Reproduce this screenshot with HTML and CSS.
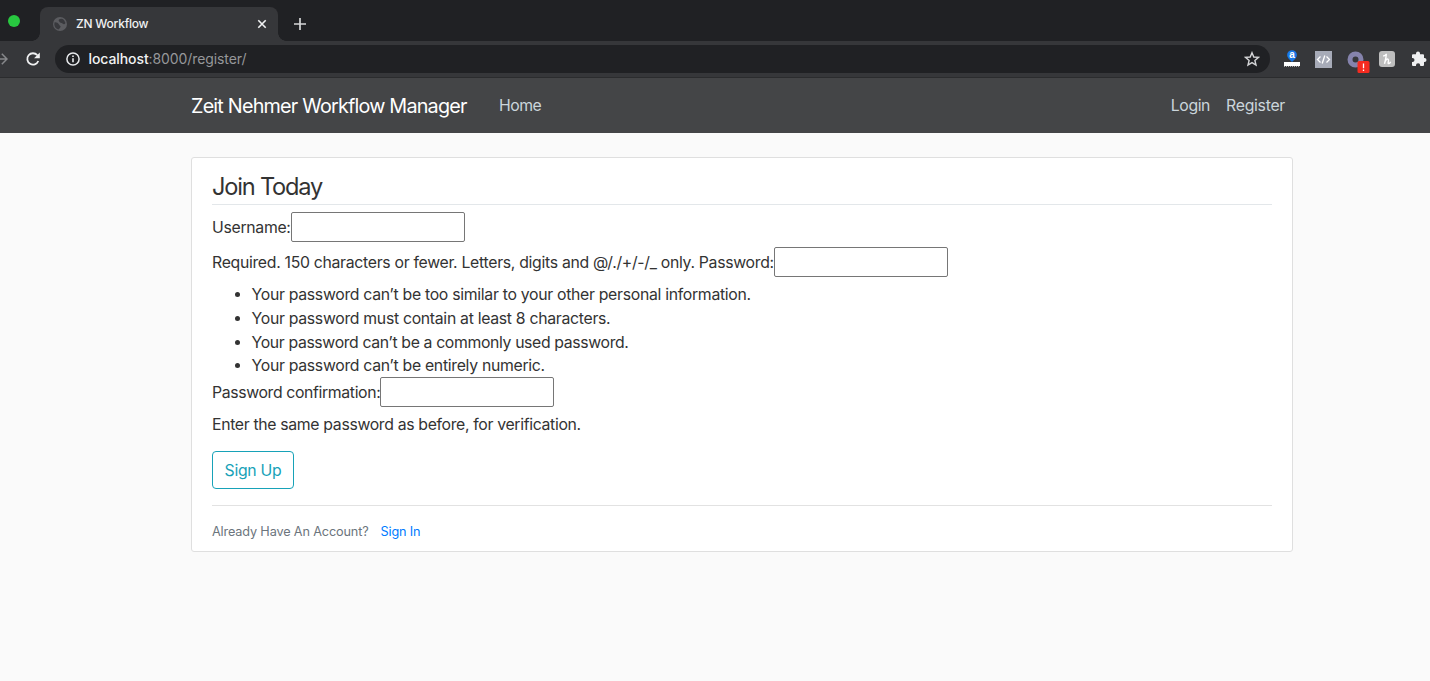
FILE: index.html
```html
<!DOCTYPE html>
<html lang="en">
<head>
<meta charset="utf-8">
<title>ZN Workflow</title>
<link rel="stylesheet" href="styles.css">
</head>
<body>
<div class="tabstrip">
  <span class="window-dot"></span>
  <div class="tab">
    <svg class="globe" width="14" height="14" viewBox="0 0 14 14"><circle cx="7" cy="7" r="7" fill="#5b5c60"/><path d="M1.5 5.5C3 5 5 6 6 7.5S8 9 7.500 10 6 12 5.500 12.500C3 12 1.500 10 1.300 7.500ZM6 2.500C7.500 1.500 9.500 1.600 11 3L12.500 6C11.500 7.800 10.500 7.500 9.500 6.500S7 6 6.500 5 5.200 3.500 6 2.500Z" fill="#38393d"/></svg>
    <span class="tab-title">ZN Workflow</span>
    <svg class="tab-close" width="10" height="10" viewBox="0 0 10 10"><path d="M1.300 1.300 8.700 8.700M8.700 1.300 1.300 8.700" stroke="#f1f2f3" stroke-width="1.600"/></svg>
  </div>
  <svg class="tab-new" width="12" height="12" viewBox="0 0 12 12"><path d="M6 0V12M0 6H12" stroke="#d5d6d8" stroke-width="1.700"/></svg>
</div>
<div class="toolbar">
  <svg class="forward" width="8" height="12" viewBox="0 0 8 12"><path d="M0 6H7M1.800 .8 7 6 1.800 11.200" fill="none" stroke="#87888b" stroke-width="1.500"/></svg>
  <svg class="reload" width="16" height="16" viewBox="0 0 16 16"><path d="M13.300 10A5.700 5.700 0 1 1 12.300 4.200" fill="none" stroke="#f1f2f3" stroke-width="1.800"/><path d="M14.800 1.500V7.200H9.100Z" fill="#f1f2f3"/></svg>
  <div class="address">
    <svg width="14" height="14" viewBox="0 0 14 14"><circle cx="7" cy="7" r="6.100" fill="none" stroke="#e8eaed" stroke-width="1.500"/><path d="M7 6.200V10.300M7 3.500V5" stroke="#e8eaed" stroke-width="1.600"/></svg>
    <span class="url"><b>localhost</b>:8000/register/</span>
    <svg class="star" width="16" height="16" viewBox="0 0 16 16"><path d="M8 1.700 9.800 6 14.500 6.400 10.900 9.500 12 14.100 8 11.600 4 14.100 5.100 9.500 1.500 6.400 6.200 6Z" fill="none" stroke="#d5d6d8" stroke-width="1.400"/></svg>
  </div>
  <div class="extensions">
    <svg width="16" height="18" viewBox="0 0 16 18"><path d="M8 12 4.500 8.500A4.900 4.900 0 1 1 11.500 8.500Z" fill="#1877e8"/><text x="8" y="8" class="letter-a">a</text><path d="M0 12H16V16H0Z" fill="#fff"/><path d="M0 16.500H16" stroke="#aaa" stroke-dasharray="1 1"/></svg>
    <svg width="17" height="17" viewBox="0 0 17 17"><path d="M0 0H17V17H0Z" fill="#a7abb8"/><path d="M5.500 5.500 2.500 8.500 5.500 11.500M11.500 5.500 14.500 8.500 11.500 11.500M9.800 4.500 7.200 12.500" fill="none" stroke="#fff" stroke-width="1.300"/></svg>
    <svg width="23" height="23" viewBox="0 0 23 23"><circle cx="8.500" cy="8.500" r="5.500" fill="none" stroke="#8583ac" stroke-width="5"/><rect x="10.500" y="10" width="12" height="12" rx="1.500" fill="#f52b20"/><path d="M16.500 12.500V17.300M16.500 18.500V20" stroke="#fff" stroke-width="1.300"/></svg>
    <svg width="16" height="16" viewBox="0 0 16 16"><rect width="16" height="16" rx="3" fill="#bebebe"/><path d="M4.200 5C5.500 4.800 7.200 4 7.300 2.800C7.300 6 6.500 9 5.500 12.800C6.200 9.500 8 7.300 9.200 8.200S8.300 12.300 9.500 12.500 11.300 11.500 11.600 10.700" fill="none" stroke="#fff" stroke-width="1.400"/></svg>
    <svg width="16" height="16" viewBox="0 0 16 16"><path d="M1 4.300Q1 3.300 2 3.300H5V2.500A2 2 0 0 1 9 2.500V3.300H12Q13 3.300 13 4.300V7H13.500A2 2 0 0 1 13.500 11H13V14Q13 15 12 15H9.200V14.300A2.100 2.100 0 0 0 5 14.300V15H2Q1 15 1 14V11H1.500A2 2 0 0 0 1.500 7H1Z" fill="#eff0f1"/></svg>
  </div>
</div>
<nav class="navbar">
  <a class="brand">Zeit Nehmer Workflow Manager</a>
  <a class="nav-link home">Home</a>
  <a class="nav-link login">Login</a>
  <a class="nav-link">Register</a>
</nav>
<main class="card">
  <h1 class="legend">Join Today</h1>
  <form>
    <div class="row row-user"><label>Username:</label><input></div>
    <div class="row row-pass"><span>Required. 150 characters or fewer. Letters, digits and @/./+/-/_ only. Password:</span><input></div>
    <ul class="rules">
      <li>Your password can’t be too similar to your other personal information.</li>
      <li>Your password must contain at least 8 characters.</li>
      <li class="rule-common">Your password can’t be a commonly used password.</li>
      <li>Your password can’t be entirely numeric.</li>
    </ul>
    <div class="row row-confirm"><label>Password confirmation:</label><input></div>
    <p class="help">Enter the same password as before, for verification.</p>
    <button class="signup" type="button">Sign Up</button>
  </form>
  <div class="footer"><span>Already Have An Account?</span><a class="signin">Sign In</a></div>
</main>
</body>
</html>
```

FILE: styles.css
```css
* { box-sizing: border-box; }
body { margin: 0; height: 681px; overflow: hidden; background: #fafafa; color: #333; font: 16px/24px Inter, "Liberation Sans", sans-serif; }
svg { display: block; flex: none; }
.tabstrip { height: 41px; background: #202124; display: flex; align-items: flex-end; }
.window-dot { width: 12px; height: 12px; border-radius: 50%; background: #28c840; margin: 0 20px 14px 8px; flex: none; }
.tab { position: relative; width: 238px; height: 34px; background: #36373a; border-radius: 8px 8px 0 0; display: flex; align-items: center; padding: 0 11px 0 13px; }
.tab::before, .tab::after { content: ""; position: absolute; bottom: 0; width: 8px; height: 8px; }
.tab::before { left: -8px; background: radial-gradient(circle at 0 0, transparent 7.5px, #36373a 8px); }
.tab::after { right: -8px; background: radial-gradient(circle at 100% 0, transparent 7.5px, #36373a 8px); }
.tab-title { margin-left: 9px; color: #f1f2f3; font-size: 12px; font-weight: 500; letter-spacing: -.22px; }
.tab-close { margin-left: auto; }
.tab-new { margin: 0 0 11px 16px; }
.toolbar { height: 37px; background: #36373a; border-bottom: 1px solid #2b2c2e; display: flex; align-items: center; }
.reload { margin-left: 17px; }
.address { width: 1215px; height: 28px; margin-left: 14px; border-radius: 14px; background: #202124; display: flex; align-items: center; padding: 0 10px 0 11px; flex: none; }
.url { margin-left: 8.5px; color: #96979a; font-size: 14px; letter-spacing: -.09px; white-space: nowrap; }
.url b { color: #f1f2f3; font-weight: 500; }
.star { margin-left: auto; }
.extensions { display: flex; align-items: center; margin-left: 14px; gap: 15px; flex: none; }
.extensions svg:nth-child(3) { margin: 7px -7px 0 0; }
.extensions svg:nth-child(4) { margin-left: 1px; }
.extensions svg:nth-child(5) { margin-left: 1px; }
.letter-a { font: bold 10px "Liberation Sans", sans-serif; fill: #fff; text-anchor: middle; }
.navbar { height: 55px; background: #444547; display: flex; align-items: center; padding: 0 145px 0 191px; white-space: nowrap; }
.brand { width: 276px; color: #fff; font-size: 19.8px; letter-spacing: -.8px; }
.nav-link { color: #cbd5db; font-size: 15.8px; letter-spacing: -.28px; margin: 1px 0 0 16px; }
.home { margin-left: 32px; letter-spacing: -.5px; }
.login { margin-left: auto; letter-spacing: -.4px; }
.card { width: 1102px; height: 395px; margin: 24px 0 0 191px; background: #fff; border: 1px solid #dfdfdf; border-radius: 3px; padding: 14px 20px 0; white-space: nowrap; }
.legend { margin: 0; height: 33px; border-bottom: 1px solid #e3e7ea; font-size: 23.6px; line-height: 30px; font-weight: 400; letter-spacing: -1.2px; }
.row { display: flex; align-items: center; height: 30px; }
.row label, .row span { padding-top: 2px; }
.row-user { margin-top: 7px; }
.row-pass { margin-top: 5px; }
input { width: 174px; height: 30px; border: 1px solid #767676; border-radius: 2px; background: #fff; padding: 0; }
.rules { margin: 6px 0 0; padding-left: 39.5px; line-height: 23.8px; }
.rules, .row, .help { font-size: 15.8px; letter-spacing: -.3px; }
.rule-common { letter-spacing: -.36px; }
.row-confirm { margin-top: -1px; letter-spacing: -.36px; }
.help { margin: 6px 0 0; letter-spacing: -.33px; }
.signup { display: block; width: 82px; height: 38px; margin: 14px 0 0; border: 1px solid #17a2b8; border-radius: 4px; background: #fff; color: #17a2b8; font: 15.8px/24px Inter, sans-serif; letter-spacing: -.3px; padding: 2px 0 0; }
.footer { margin-top: 16px; border-top: 1px solid #e2e2e2; padding-top: 14px; display: flex; font-size: 12.7px; letter-spacing: -.15px; color: #6c757d; }
.signin { margin-left: 12px; color: #007bff; }
```
